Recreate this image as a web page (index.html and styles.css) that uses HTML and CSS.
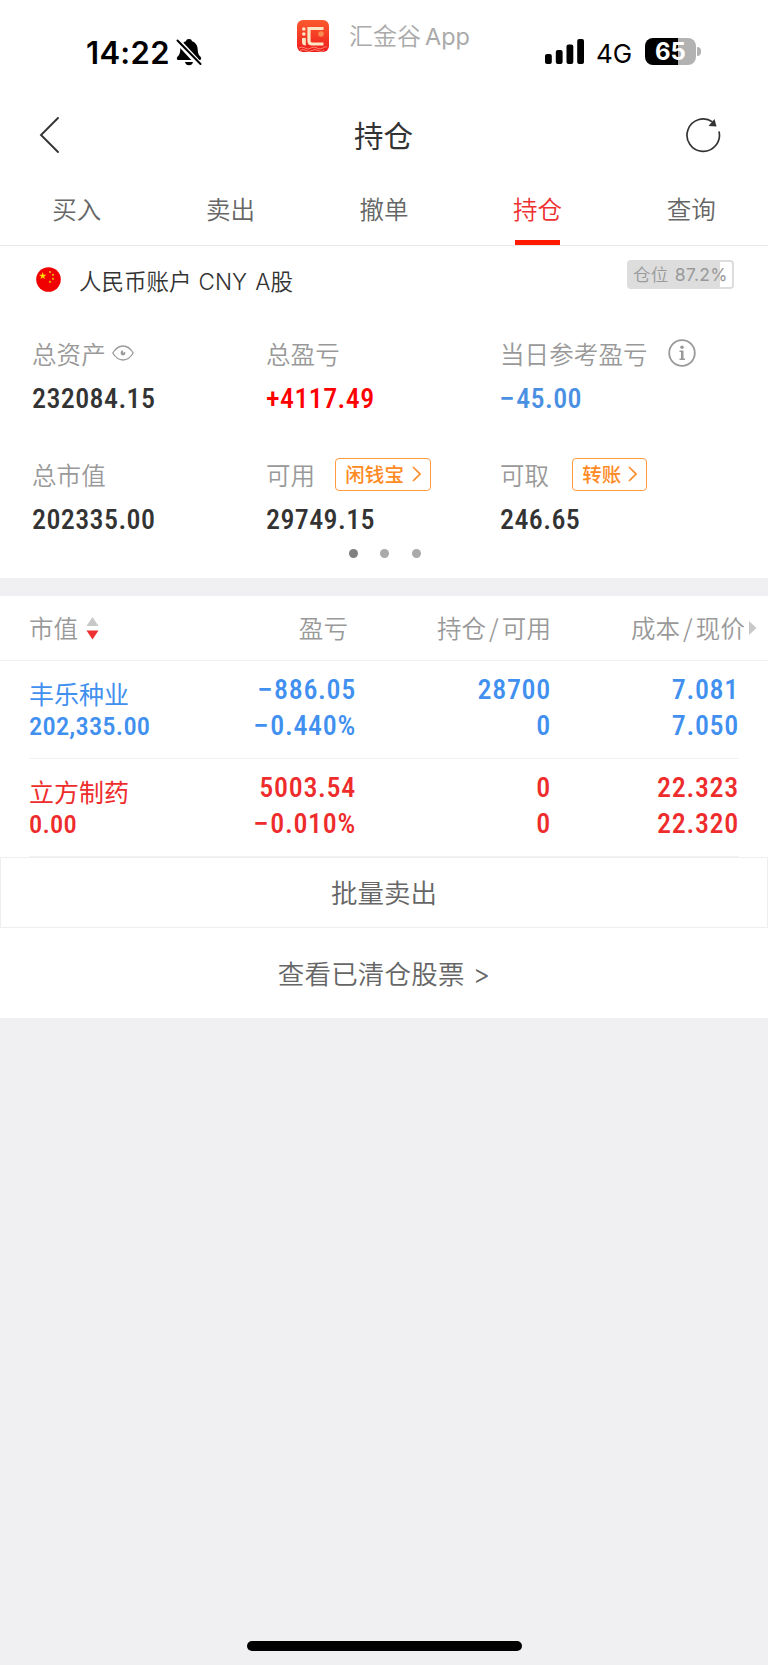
FILE: index.html
```
<!DOCTYPE html>
<html lang="zh-CN">
<head>
  <meta charset="UTF-8" />
  <meta name="viewport" content="width=device-width, initial-scale=1.0"/>
  <title>持仓</title>
  <link rel="stylesheet" href="styles.css">
</head>
<body>

  <!-- Status bar -->
  <div class="status-bar">
    <div class="clock">
      <span class="time">14:22</span>
      <svg class="bell" width="26" height="28" viewBox="0 0 26 28">
        <path d="M13 1c1.8 0 2.7.9 3 2.2 4 1.300 5.500 4.300 5.700 8.300.2 4.300 1.300 5.800 3 7.500.9 1 .6 3-1 3H2.300c-1.600 0-1.900-2-1-3 1.700-1.700 2.800-3.200 3-7.500.2-4 1.700-7 5.700-8.300.3-1.300 1.200-2.200 3-2.200zM9 24h8c-.3 2-1.900 3.300-4 3.300S9.300 26 9 24z"/>
        <path d="M-1 0L25 28" stroke="#fff" stroke-width="6"/>
        <path d="M1.500 2.500L24.500 26" stroke="#000" stroke-width="2" stroke-linecap="round"/>
      </svg>
    </div>
    <div class="app-name">
      <svg width="32" height="32" viewBox="0 0 32 32">
        <defs>
          <linearGradient id="logoFill" x1="0" y1="0" x2="0" y2="1">
            <stop offset="0" stop-color="#fb5a2e"/>
            <stop offset="1" stop-color="#ee1c1c"/>
          </linearGradient>
        </defs>
        <rect width="32" height="32" rx="6" fill="url(#logoFill)"/>
        <path d="M2 28q3-2 6 0t6 0 6 0 6 0 4-1M3 30.500q3-2 6 0t6 0 6 0 6 0" fill="none" stroke="#ff9a80" stroke-width=".8"/>
        <path d="M26.500 8.500H12v12.500q0 3 3 3h11.500" fill="none" stroke="#fde6c4" stroke-width="3.200"/>
        <circle cx="6.800" cy="9" r="1.800" fill="#fde6c4"/>
        <circle cx="6.800" cy="14" r="1.800" fill="#fde6c4"/>
        <path d="M5 18h3.800v7.500Q5 25.500 5 22z" fill="#fde6c4"/>
        <circle cx="24" cy="14" r="2.800" fill="#f98a50"/>
      </svg>
      <span>汇金谷<span class="latin">App</span></span>
    </div>
    <div class="signals">
      <svg width="39" height="25" viewBox="0 0 39 25">
        <rect x="0" y="15" width="6.800" height="10" rx="2"/>
        <rect x="10.800" y="11" width="6.800" height="14" rx="2"/>
        <rect x="21.500" y="5.500" width="6.800" height="19.500" rx="2"/>
        <rect x="32.200" y="0" width="6.800" height="25" rx="2"/>
      </svg>
      <span class="network">4G</span>
      <span class="battery">65</span>
      <span class="battery-cap"></span>
    </div>
  </div>

  <!-- Title bar -->
  <div class="title-bar">
    <svg width="20" height="38" viewBox="0 0 20 38">
      <path d="M19 2L2 19l17 17" fill="none" stroke="#333" stroke-width="1.900" stroke-linecap="round"/>
    </svg>
    <h1>持仓</h1>
    <svg width="36" height="36" viewBox="0 0 36 36">
      <path d="M34 14.500A16.200 16.200 0 1 1 27.500 4.900" fill="none" stroke="#333" stroke-width="1.700"/>
      <path d="M29.500 2l2 7.500-8-.5z" fill="#333"/>
    </svg>
  </div>

  <!-- Tabs -->
  <div class="tabs">
    <div class="tab">买入</div>
    <div class="tab">卖出</div>
    <div class="tab">撤单</div>
    <div class="tab active">持仓</div>
    <div class="tab">查询</div>
  </div>

  <!-- Account summary -->
  <div class="account">
    <svg width="25" height="25" viewBox="0 0 25 25">
      <circle cx="12.500" cy="12.500" r="12.300" fill="#f00000"/>
      <path d="M6.700 5l.9 2.700h2.800L8.100 9.400l.9 2.700-2.300-1.700-2.300 1.700.9-2.700L3 7.700h2.800z" fill="#ffde00"/>
      <g fill="#e8b800">
        <circle cx="14" cy="5" r="1.100"/>
        <circle cx="17" cy="7.800" r="1.100"/>
        <circle cx="17" cy="11.800" r="1.100"/>
        <circle cx="14" cy="14.800" r="1.100"/>
      </g>
    </svg>
    <span class="account-name">人民币账户 <span class="latin">CNY A</span>股</span>
    <span class="position">仓位 <span class="latin">87.2%</span></span>
  </div>

  <div class="summary">
    <div class="item">
      <div class="label">总资产
        <svg class="eye" width="22" height="16" viewBox="0 0 22 16">
          <path d="M.8 8Q5 1 11 1t10.200 7Q17 15 11 15T.8 8z" fill="none" stroke="#999" stroke-width="1.300"/>
          <circle cx="11" cy="8" r="2.400" fill="#999"/>
          <path d="M11 8V5l3 1z" fill="#fff"/>
        </svg>
      </div>
      <div class="value">232084.15</div>
    </div>
    <div class="item">
      <div class="label">总盈亏</div>
      <div class="value profit">+4117.49</div>
    </div>
    <div class="item">
      <div class="label">当日参考盈亏
        <svg class="info" width="28" height="28" viewBox="0 0 28 28">
          <circle cx="14" cy="14" r="12.800" fill="none" stroke="#999" stroke-width="1.800"/>
          <circle cx="14" cy="8.300" r="1.800" fill="#999"/>
          <path d="M11.500 11.500h4v8h1.500v1.500h-5.500v-1.500H13V13h-1.500z" fill="#999"/>
        </svg>
      </div>
      <div class="value today"><span class="minus">−</span>45.00</div>
    </div>
    <div class="item">
      <div class="label">总市值</div>
      <div class="value">202335.00</div>
    </div>
    <div class="item">
      <div class="label">可用
        <span class="tag">闲钱宝
          <svg width="9" height="16" viewBox="0 0 9 16"><path d="M1 1l7 7-7 7" fill="none" stroke="#ff8a24" stroke-width="1.600"/></svg>
        </span>
      </div>
      <div class="value">29749.15</div>
    </div>
    <div class="item">
      <div class="label">可取
        <span class="tag transfer">转账
          <svg width="9" height="16" viewBox="0 0 9 16"><path d="M1 1l7 7-7 7" fill="none" stroke="#ff8a24" stroke-width="1.600"/></svg>
        </span>
      </div>
      <div class="value">246.65</div>
    </div>
  </div>

  <div class="dots">
    <span class="dot current"></span>
    <span class="dot"></span>
    <span class="dot"></span>
  </div>

  <!-- Holdings -->
  <div class="holdings">
    <div class="row head">
      <div class="sort">市值
        <svg width="13" height="23" viewBox="0 0 13 23">
          <path d="M6.500 0L12.500 9H.5z" fill="#c8c8c8"/>
          <path d="M.5 13.500h12L6.500 22.500z" fill="#ee3030"/>
        </svg>
      </div>
      <div class="gain">盈亏</div>
      <div>持仓<i>/</i>可用</div>
      <div class="price">成本<i>/</i>现价
        <svg width="8" height="14" viewBox="0 0 8 14"><path d="M0 0l7.500 7L0 14z" fill="#c8c8c8"/></svg>
      </div>
    </div>
    <div class="row down">
      <div class="stock"><b>丰乐种业</b><span>202,335.00</span></div>
      <div><span class="minus">−</span>886.05<br><span class="minus">−</span>0.440%</div>
      <div>28700<br>0</div>
      <div>7.081<br>7.050</div>
    </div>
    <div class="row up">
      <div class="stock"><b>立方制药</b><span>0.00</span></div>
      <div>5003.54<br><span class="minus">−</span>0.010%</div>
      <div>0<br>0</div>
      <div>22.323<br>22.320</div>
    </div>
  </div>

  <div class="batch-sell">批量卖出</div>
  <div class="cleared">查看已清仓股票 <span class="latin">&gt;</span></div>

  <div class="home-bar"></div>

</body>
</html>
```
FILE: styles.css
```
* {
  box-sizing: border-box;
}

body {
  display: flex;
  flex-direction: column;
  height: 1665px;
  margin: 0;
  background-color: #f0f0f3;
  font-family: "Noto Sans CJK SC", sans-serif;
  font-weight: 350;
  color: #333;
}

svg {
  display: block;
  flex: none;
}

.latin {
  font-family: Inter, sans-serif;
  font-weight: 300;
}

/* Status bar */
.status-bar {
  display: grid;
  grid-template-columns: 297px 248px 1fr;
  height: 104px;
  background-color: white;
  font-family: Inter, sans-serif;
  color: black;
}

.clock {
  display: flex;
  align-items: center;
  height: 104px;
  padding-left: 86px;
}

.time {
  width: 90px;
  font-size: 31px;
  font-weight: 600;
  letter-spacing: 0.3px;
}

.app-name {
  display: flex;
  align-items: center;
  gap: 20px;
  height: 72px;
  font-family: "Noto Sans CJK SC", sans-serif;
  font-size: 24px;
  line-height: 34px;
  color: #aaa;
}

.app-name .latin {
  margin-left: 4px;
  font-size: 23.5px;
  font-weight: 400;
}

.signals {
  display: flex;
  align-items: center;
  height: 103px;
}

.network {
  width: 48px;
  margin-left: 12px;
  padding-top: 3px;
  font-size: 26px;
  font-weight: 400;
}

.battery {
  width: 51px;
  height: 27px;
  margin-left: 1px;
  border-radius: 8px;
  background: linear-gradient(to right, black 65%, #b2b2b2 65%);
  color: white;
  font-size: 24px;
  font-weight: 700;
  line-height: 28px;
  text-align: center;
}

.battery-cap {
  width: 4px;
  height: 9px;
  margin-left: 1px;
  border-radius: 0 4px 4px 0;
  background-color: #b2b2b2;
}

/* Title bar */
.title-bar {
  display: grid;
  grid-template-columns: 1fr auto 1fr;
  align-items: center;
  height: 63px;
  padding: 0 47px 1px 39px;
  background-color: white;
}

.title-bar svg:last-child {
  justify-self: end;
}

h1 {
  margin: 0 0 3px 7px;
  font-size: 29.5px;
  font-weight: 400;
}

/* Tabs */
.tabs {
  display: grid;
  grid-template-columns: repeat(5, 1fr);
  justify-items: center;
  height: 79px;
  background-color: white;
  border-bottom: 1px solid #e8e8e8;
}

.tab {
  height: 78px;
  font-size: 24.5px;
  line-height: 83px;
  color: #666;
}

.tab.active {
  width: 45px;
  border-bottom: 5px solid #ff1a00;
  color: #ee3030;
  white-space: nowrap;
  display: flex;
  justify-content: center;
}

/* Account */
.account {
  display: flex;
  align-items: center;
  height: 67px;
  padding: 0 34px 0 36px;
  background-color: white;
}

.account-name {
  flex: 1;
  padding: 1px 0 0 18px;
  font-size: 22.5px;
  word-spacing: 2px;
}

.position {
  width: 107px;
  height: 29px;
  margin-bottom: 10px;
  padding-left: 4px;
  border: 2px solid #ddd;
  border-radius: 4px;
  background: linear-gradient(to right, #ddd 88%, white 88%);
  color: #999;
  font-size: 17.5px;
  line-height: 24px;
  word-spacing: 2px;
  letter-spacing: 0.3px;
  white-space: nowrap;
}

.position .latin {
  font-weight: 400;
}

.summary {
  display: grid;
  grid-template-columns: 234px 234px 1fr;
  grid-template-rows: 121px 95px;
  padding: 19px 0 0 32px;
  background-color: white;
}

.label {
  display: flex;
  align-items: center;
  height: 42px;
  font-size: 24.5px;
  letter-spacing: 0.1px;
  color: #999;
}

.eye {
  margin-left: 6px;
}

.info {
  margin-left: 20px;
}

.tag {
  display: flex;
  align-items: center;
  justify-content: space-between;
  width: 96px;
  height: 33px;
  margin-left: 20px;
  padding: 0 9px 1px;
  border: 1px solid #ff9a40;
  border-radius: 4px;
  font-size: 19.5px;
  font-weight: 500;
  color: #ff8a24;
}

.transfer {
  width: 75px;
  margin-left: 23px;
}

.value {
  font-family: Roboto, sans-serif;
  font-size: 28px;
  font-stretch: 87%;
  font-weight: 500;
  letter-spacing: 0.4px;
  line-height: 49px;
}

.minus {
  display: inline-block;
  transform: scaleX(1.15);
  margin-right: 2px;
}

.profit {
  color: #f00;
}

.today {
  color: #4a90e2;
}

.dots {
  display: flex;
  justify-content: center;
  gap: 22.500px;
  height: 30px;
  padding: 1px 0 0 1px;
  background-color: white;
}

.dot {
  width: 9px;
  height: 9px;
  border-radius: 50%;
  background-color: #aaa;
}

.current {
  background-color: #808080;
}

/* Holdings */
.holdings {
  margin-top: 18px;
  background-color: white;
}

.row {
  display: grid;
  grid-template-columns: 140px 187px 195px 1fr;
  height: 98px;
  margin: 0 29px;
  padding-top: 11px;
  border-bottom: 1px solid #f2f2f2;
  font-family: Roboto, sans-serif;
  font-size: 28px;
  font-stretch: 87%;
  font-weight: 480;
  letter-spacing: 0.7px;
  line-height: 36px;
  text-align: right;
}

.head {
  height: 65px;
  margin: 0;
  padding: 0 23px 0 29px;
  align-items: center;
  font-family: "Noto Sans CJK SC", sans-serif;
  font-size: 24.5px;
  font-stretch: normal;
  font-weight: 350;
  letter-spacing: 0.1px;
  color: #999;
}

.head i {
  margin: 0 3px;
  font-style: normal;
}

.gain {
  padding-right: 8px;
}

.sort,
.price {
  display: flex;
  align-items: center;
}

.sort svg {
  margin-left: 8px;
}

.price {
  justify-content: flex-end;
}

.price svg {
  margin: 0 -12px 0 4px;
}

.down {
  color: #4190f0;
}

.up {
  color: #ee2c2c;
}

.stock {
  display: flex;
  flex-direction: column;
  text-align: left;
  white-space: nowrap;
}

.stock b {
  height: 36px;
  font-family: "Noto Sans CJK SC", sans-serif;
  font-size: 25px;
  font-weight: 400;
  letter-spacing: 0;
  line-height: 43px;
}

.stock span {
  font-size: 26.5px;
  letter-spacing: 0.2px;
}

.batch-sell {
  height: 71px;
  border: 1px solid #eee;
  background-color: white;
  font-size: 26.5px;
  line-height: 68px;
  text-align: center;
  color: #666;
}

.cleared {
  height: 90px;
  background-color: white;
  font-size: 26.5px;
  line-height: 89px;
  letter-spacing: 0.2px;
  word-spacing: 2px;
  text-align: center;
  color: #666;
}

.home-bar {
  width: 275px;
  height: 10px;
  margin: auto auto 14px;
  border-radius: 5px;
  background-color: black;
}
```
